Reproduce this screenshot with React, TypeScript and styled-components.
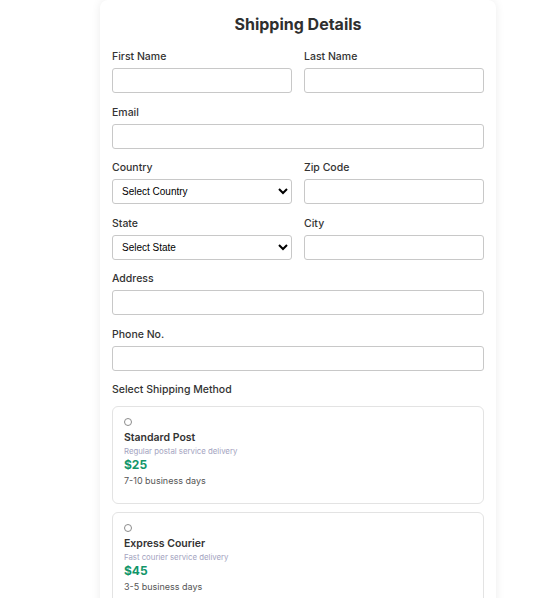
import React from "react";
import styled, { createGlobalStyle } from "styled-components";

const Global = createGlobalStyle`
  html, body { margin: 0; padding: 0; background: #fff; }
  body { font-family: Inter, "Noto Sans", sans-serif; color: #333; }
  * { box-sizing: border-box; }
`;

const Page = styled.div`
  padding-left: 100px;
  width: 546px;
`;

const Card = styled.div`
  width: 396px;
  background: #fff;
  border-radius: 8px;
  box-shadow: 0 0 10px rgba(0, 0, 0, 0.08);
  padding: 12px 12px 12px;
`;

const Title = styled.h2`
  margin: 0 0 13px;
  text-align: center;
  font-size: 16px;
  line-height: 24px;
  font-weight: 700;
  color: #2f2f2f;
`;

const Row = styled.div`
  display: grid;
  grid-template-columns: 1fr 1fr;
  column-gap: 12px;
`;

const Field = styled.div`
  display: flex;
  flex-direction: column;
  margin-bottom: 11.5px;
`;

const Label = styled.label`
  font-size: 10.5px;
  font-weight: 500;
  line-height: 16px;
  color: #333;
  margin-bottom: 3px;
`;

const Input = styled.input`
  height: 25px;
  width: 100%;
  border: 1px solid #c8c8c8;
  border-radius: 3px;
  padding: 0 8px;
  font-size: 10px;
`;

const Select = styled.select`
  height: 25px;
  width: 100%;
  border: 1px solid #c8c8c8;
  border-radius: 3px;
  padding: 0 5px;
  font-family: "Liberation Sans", Arial, sans-serif;
  font-size: 10px;
  color: #000;
  background: #fff;
`;

const SectionLabel = styled.div`
  font-size: 10.5px;
  font-weight: 500;
  line-height: 16px;
  color: #333;
  margin-bottom: 8px;
`;

const Methods = styled.div`
  display: flex;
  flex-direction: column;
  gap: 8px;
`;

const Method = styled.div`
  border: 1px solid #e3e3e3;
  border-radius: 6px;
  padding: 11px 11px 14px;
  display: flex;
  flex-direction: column;
  align-items: flex-start;
`;

const Radio = styled.input`
  appearance: none;
  margin: 0 0 5px;
  width: 8px;
  height: 8px;
  border: 1px solid #8c8c8c;
  border-radius: 50%;
  background: #fff;
`;

const MethodName = styled.div`
  font-size: 10.5px;
  font-weight: 600;
  line-height: 14px;
  color: #333;
`;

const MethodDesc = styled.div`
  font-size: 7.8px;
  line-height: 12px;
  color: #a3a3c0;
`;

const Price = styled.div`
  font-size: 12px;
  font-weight: 700;
  line-height: 16px;
  color: #12966a;
`;

const Days = styled.div`
  font-size: 9px;
  line-height: 16px;
  color: #555;
`;

const methods = [
  { name: "Standard Post", desc: "Regular postal service delivery", price: "$25", days: "7-10 business days" },
  { name: "Express Courier", desc: "Fast courier service delivery", price: "$45", days: "3-5 business days" },
];

export default function App() {
  return (
    <>
      <Global />
      <Page>
        <Card>
          <Title>Shipping Details</Title>
          <Row>
            <Field>
              <Label>First Name</Label>
              <Input />
            </Field>
            <Field>
              <Label>Last Name</Label>
              <Input />
            </Field>
          </Row>
          <Field>
            <Label>Email</Label>
            <Input />
          </Field>
          <Row>
            <Field>
              <Label>Country</Label>
              <Select defaultValue="">
                <option value="">Select Country</option>
              </Select>
            </Field>
            <Field>
              <Label>Zip Code</Label>
              <Input />
            </Field>
          </Row>
          <Row>
            <Field>
              <Label>State</Label>
              <Select defaultValue="">
                <option value="">Select State</option>
              </Select>
            </Field>
            <Field>
              <Label>City</Label>
              <Input />
            </Field>
          </Row>
          <Field>
            <Label>Address</Label>
            <Input />
          </Field>
          <Field>
            <Label>Phone No.</Label>
            <Input />
          </Field>
          <SectionLabel>Select Shipping Method</SectionLabel>
          <Methods>
            {methods.map((m) => (
              <Method key={m.name}>
                <Radio type="radio" name="shipping" />
                <MethodName>{m.name}</MethodName>
                <MethodDesc>{m.desc}</MethodDesc>
                <Price>{m.price}</Price>
                <Days>{m.days}</Days>
              </Method>
            ))}
          </Methods>
        </Card>
      </Page>
    </>
  );
}
